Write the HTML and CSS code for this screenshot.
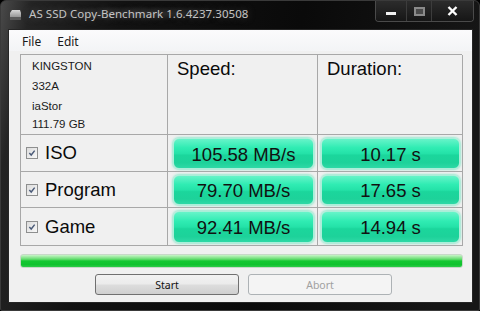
FILE: index.html
```html
<!DOCTYPE html>
<html>
<head>
<meta charset="utf-8">
<link rel="stylesheet" href="styles.css">
</head>
<body>
<div class="window">
  <div class="titlebar">
    <svg class="appicon" width="13" height="12" viewBox="0 0 13 12">
      <defs><linearGradient id="ig" x1="0" y1="0" x2="0" y2="1"><stop offset="0" stop-color="#d8d8d8"/><stop offset="1" stop-color="#7a7a7a"/></linearGradient></defs>
      <path d="M1 4 L3 1 L11 1 L12 4 L12 11 L1 11 Z" fill="url(#ig)"/>
      <rect x="1" y="8" width="11" height="3" fill="#5a5a5a"/>
    </svg>
    <div class="title">AS SSD Copy-Benchmark 1.6.4237.30508</div>
    <div class="caption">
      <div class="cbtn min"><span class="minbar"></span></div>
      <div class="cbtn max"><span class="maxbox"></span></div>
      <div class="cbtn close"><svg width="11" height="10" viewBox="0 0 11 10"><path d="M1.5 1 L9.5 9 M9.5 1 L1.5 9" stroke="#fff" stroke-width="2.4"/></svg></div>
    </div>
  </div>
  <div class="client">
    <div class="menubar"><span class="mitem">File</span><span class="mitem">Edit</span></div>
    <div class="content">
      <div class="grid">
        <div class="cell info">
          <div class="l1">KINGSTON</div>
          <div class="l2">332A</div>
          <div class="l3">iaStor</div>
          <div class="l4">111.79 GB</div>
        </div>
        <div class="cell head">Speed:</div>
        <div class="cell head">Duration:</div>

        <div class="cell label"><span class="chk"><svg width="8" height="8" viewBox="0 0 9 9"><path d="M1.5 4.5 L3.6 6.8 L7.5 1.8" fill="none" stroke="#4a5a78" stroke-width="1.6"/></svg></span>ISO</div>
        <div class="cell val"><div class="pill">105.58 MB/s</div></div>
        <div class="cell val dur"><div class="pill">10.17 s</div></div>

        <div class="cell label"><span class="chk"><svg width="8" height="8" viewBox="0 0 9 9"><path d="M1.5 4.5 L3.6 6.8 L7.5 1.8" fill="none" stroke="#4a5a78" stroke-width="1.6"/></svg></span>Program</div>
        <div class="cell val"><div class="pill">79.70 MB/s</div></div>
        <div class="cell val dur"><div class="pill">17.65 s</div></div>

        <div class="cell label"><span class="chk"><svg width="8" height="8" viewBox="0 0 9 9"><path d="M1.5 4.5 L3.6 6.8 L7.5 1.8" fill="none" stroke="#4a5a78" stroke-width="1.6"/></svg></span>Game</div>
        <div class="cell val"><div class="pill">92.41 MB/s</div></div>
        <div class="cell val dur"><div class="pill">14.94 s</div></div>
      </div>
      <div class="progress"></div>
      <div class="buttons">
        <div class="btn">Start</div>
        <div class="btn disabled">Abort</div>
      </div>
    </div>
  </div>
</div>
</body>
</html>
```
FILE: styles.css
```css
html, body {
  margin: 0;
  padding: 0;
  width: 480px;
  height: 311px;
  overflow: hidden;
  background: #000;
}
.window {
  width: 480px;
  height: 311px;
  box-sizing: border-box;
  display: flex;
  flex-direction: column;
  border-radius: 6px 6px 2px 2px;
  border: 1px solid #3a3a3a;
  background: linear-gradient(100deg, #4a4a4a 0px, #242424 30px, #121212 120px, #0a0a0a 300px, #161616 480px);
}
.titlebar {
  height: 28px;
  display: flex;
  align-items: flex-start;
  position: relative;
}
.appicon {
  margin: 8px 0 0 8px;
  flex: none;
}
.title {
  margin: 5px 0 0 7px;
  font-family: "Noto Sans", "Open Sans", sans-serif;
  font-size: 11.5px;
  color: #c4c4c4;
  letter-spacing: 0.05px;
  text-shadow: 0 0 8px rgba(180,180,180,0.35);
  background: radial-gradient(ellipse at center, rgba(120,120,120,0.25) 0%, rgba(120,120,120,0) 70%);
  padding: 0 4px 0 0;
  white-space: nowrap;
}
.caption {
  margin-left: auto;
  margin-right: 5px;
  display: flex;
  height: 20px;
  border: 1px solid #4a4a4a;
  border-top: none;
  border-radius: 0 0 4px 4px;
  overflow: hidden;
}
.cbtn {
  height: 20px;
  display: flex;
  align-items: center;
  justify-content: center;
  background: linear-gradient(#2c2c2c, #161616);
}
.min { width: 30px; border-right: 1px solid #3c3c3c; }
.max { width: 24px; border-right: 1px solid #3c3c3c; }
.close { width: 41px; }
.minbar {
  width: 10px;
  height: 3px;
  margin-top: 5px;
  background: #f0f0f0;
}
.maxbox {
  width: 7px;
  height: 5px;
  border: 2px solid #8a8a8a;
  background: #4a4a4a;
}
.client {
  flex: 1;
  margin: 0 6px 7px 7px;
  background: #f0f0f0;
  border: 1px solid #262626;
  display: flex;
  flex-direction: column;
}
.menubar {
  height: 21px;
  display: flex;
  align-items: center;
  padding-left: 5px;
  background: linear-gradient(#fbfbfc, #f3f4f6);
  font-family: "Noto Sans", "Open Sans", sans-serif;
  font-size: 12px;
  color: #1a1a1a;
}
.mitem { padding: 0 8px; margin-top: 1px; }
.content {
  padding: 3px 12px 0 11px;
  display: flex;
  flex-direction: column;
  font-family: "Liberation Sans", Arial, sans-serif;
}
.grid {
  display: grid;
  grid-template-columns: 147px 150px 145px;
  grid-template-rows: 80px 37px 36px 38px;
  border-top: 1px solid #a8a8a8;
  border-left: 1px solid #a8a8a8;
  width: 442px;
  box-sizing: border-box;
}
.cell {
  border-right: 1px solid #a8a8a8;
  border-bottom: 1px solid #a8a8a8;
  box-sizing: border-box;
  background: #f0f0f0;
}
.info {
  padding: 1px 0 0 11px;
  font-size: 11.5px;
  color: #1a1a1a;
  line-height: 20px;
}
.info .l4 { line-height: 17px; }
.head {
  padding: 2px 0 0 9px;
  font-size: 18.5px;
  color: #0a0a0a;
  line-height: 24px;
}
.label {
  display: flex;
  align-items: center;
  padding-left: 5px;
  font-size: 18.5px;
  color: #0a0a0a;
}
.chk {
  width: 10px;
  height: 10px;
  border: 1px solid #8e8f8f;
  background: linear-gradient(135deg, #dcdcdc, #f8f8f8);
  display: flex;
  align-items: center;
  justify-content: center;
  margin-right: 7px;
  box-sizing: content-box;
}
.val {
  padding: 3px 3px 2px 5px;
  display: flex;
}
.dur { padding: 3px 2px 2px 3px; }
.pill {
  flex: 1;
  border-radius: 6px;
  border: 1px solid #a9efd9;
  background: linear-gradient(to bottom, #67f4c9 0%, #30ecb3 30%, #24e2a8 50%, #1bd69c 56%, #1dd29a 82%, #2ed9a6 100%);
  box-shadow: 0 0 2px 1px rgba(120,230,195,0.7);
  display: flex;
  align-items: center;
  justify-content: center;
  font-size: 18.5px;
  color: #111;
  padding-top: 2px;
}
.progress {
  margin-top: 8px;
  height: 14px;
  width: 443px;
  border-radius: 3px;
  border: 1px solid #c8d8c8;
  box-sizing: border-box;
  background: linear-gradient(to bottom, #c9f5c9 0%, #64dc6e 35%, #14c832 50%, #10c22e 80%, #2ccc48 100%);
}
.buttons {
  margin-top: 6px;
  display: flex;
  gap: 9px;
  padding-left: 75px;
}
.btn {
  width: 144px;
  height: 21px;
  box-sizing: border-box;
  border: 1px solid #707070;
  border-radius: 3px;
  background: linear-gradient(#f2f2f2 0%, #ebebeb 48%, #dddddd 52%, #cfcfcf 100%);
  font-family: "Noto Sans", "Open Sans", sans-serif;
  font-size: 10.5px;
  color: #111;
  display: flex;
  align-items: center;
  justify-content: center;
}
.btn.disabled {
  border-color: #adb2b5;
  background: #f4f4f4;
  color: #a0a0a0;
}
```
